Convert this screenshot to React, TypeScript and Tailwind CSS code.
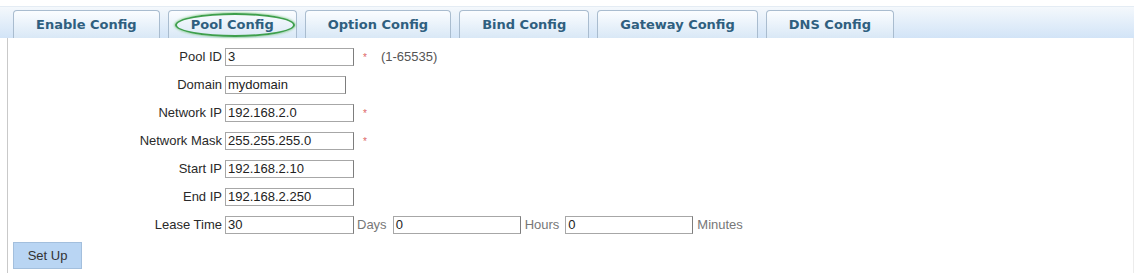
import React from 'react';

const TABS = ['Enable Config', 'Pool Config', 'Option Config', 'Bind Config', 'Gateway Config', 'DNS Config'];

type Row = {
  label: string;
  value: string;
  width?: string;
  required?: boolean;
  hint?: string;
};

const ROWS: Row[] = [
  { label: 'Pool ID', value: '3', required: true, hint: '(1-65535)' },
  { label: 'Domain', value: 'mydomain', width: 'w-[121px]' },
  { label: 'Network IP', value: '192.168.2.0', required: true },
  { label: 'Network Mask', value: '255.255.255.0', required: true },
  { label: 'Start IP', value: '192.168.2.10' },
  { label: 'End IP', value: '192.168.2.250' },
];

function TextBox({ value, width = 'w-[129px]' }: { value: string; width?: string }) {
  return (
    <div
      className={`${width} h-[18px] shrink-0 border border-[#a7a7a7] border-r-[#7d7d7d] bg-white pl-[2px] text-[13px] leading-[16px] text-[#222]`}
    >
      {value}
    </div>
  );
}

function Tab({ title, active }: { title: string; active: boolean }) {
  return (
    <div className="relative flex h-[28px] items-center rounded-t-[4px] border border-b-0 border-[#a9bccf] bg-gradient-to-b from-[#fbfdff] to-[#d9e8f6] px-[22px] pt-[1px] font-['DejaVu_Sans',sans-serif] text-[13px] font-bold text-[#2f5f7f]">
      {title}
      {active && (
        <span className="pointer-events-none absolute left-[6px] right-[1px] top-[2px] bottom-[1px] rounded-[50%] border-2 border-[#3e9f4c] shadow-[0_0_2px_1px_rgba(120,200,120,0.6)]" />
      )}
    </div>
  );
}

export default function App() {
  return (
    <div className="h-[273px] w-[1134px] overflow-hidden bg-white font-['Liberation_Sans',Arial,sans-serif]">
      <div className="mt-[6px] flex h-[32px] items-end gap-[8px] border-t border-[#e4ecf4] bg-gradient-to-b from-[#f4f8fc] to-[#d2e4f7] pl-[13px]">
        {TABS.map((t) => (
          <Tab key={t} title={t} active={t === 'Pool Config'} />
        ))}
      </div>

      <div className="ml-[7px] h-[235px] border-l border-r border-l-[#c9c9c9] border-r-[#ececec] pt-[5px]">
        {ROWS.map((r) => (
          <div key={r.label} className="flex h-[28px] items-center">
            <div className="w-[217px] pr-[3px] text-right text-[13px] text-[#2a2a2a]">{r.label}</div>
            <TextBox value={r.value} width={r.width} />
            {r.required && <span className="ml-[9px] text-[10px] text-[#d66]">*</span>}
            {r.hint && <span className="ml-[14px] text-[13px] text-[#555]">{r.hint}</span>}
          </div>
        ))}

        <div className="flex h-[28px] items-center text-[13px]">
          <div className="w-[217px] pr-[3px] text-right text-[#2a2a2a]">Lease Time</div>
          <TextBox value="30" />
          <span className="ml-[3px] mr-[6px] text-[#777]">Days</span>
          <TextBox value="0" width="w-[128px]" />
          <span className="ml-[4px] mr-[6px] text-[#777]">Hours</span>
          <TextBox value="0" width="w-[128px]" />
          <span className="ml-[4px] text-[#777]">Minutes</span>
        </div>

        <div className="mt-[3px] pl-[5px]">
          <button
            type="button"
            className="h-[27px] w-[69px] border border-[#a3bfdd] bg-[#b9d5f3] text-[13px] text-[#333]"
          >
            Set Up
          </button>
        </div>
      </div>
    </div>
  );
}
